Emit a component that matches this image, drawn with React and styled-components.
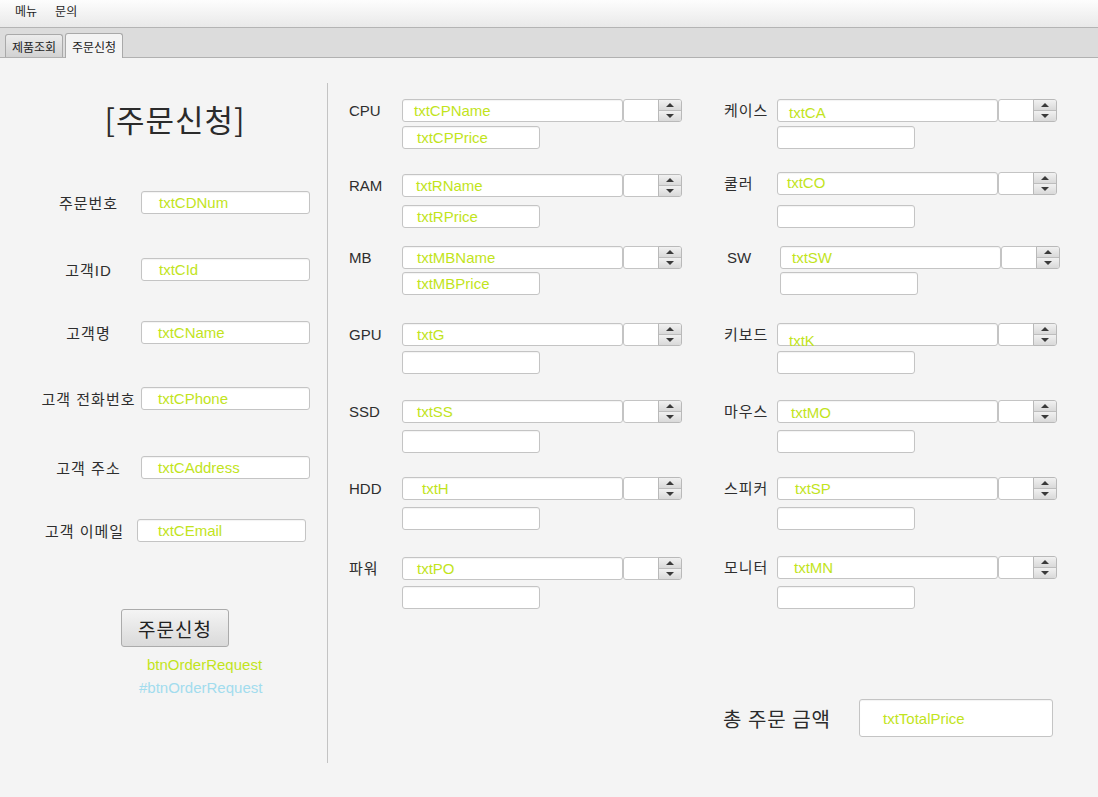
import React from "react";
import styled, { createGlobalStyle } from "styled-components";

const GlobalStyle = createGlobalStyle`
  html, body {
    margin: 0;
    padding: 0;
    background: #f4f4f4;
    font-family: "Liberation Sans", "Noto Sans CJK KR", sans-serif;
    color: #333333;
  }
  * { box-sizing: border-box; }
`;

const Page = styled.div`
  width: 1098px;
  height: 797px;
  background: #f4f4f4;
  overflow: hidden;
`;

/* 메뉴바 */
const MenuBar = styled.div`
  height: 28px;
  display: flex;
  align-items: center;
  padding: 0 0 6px 6px;
  background: linear-gradient(#fdfdfd, #e9e9e9);
  border-bottom: 1px solid #b4b4b4;
`;

const MenuItem = styled.span`
  padding: 0 9px;
  font-family: "Noto Sans CJK KR", sans-serif;
  font-size: 12px;
  color: #1e1e1e;
`;

/* 탭 */
const TabBar = styled.div`
  height: 30px;
  display: flex;
  align-items: flex-end;
  gap: 2px;
  padding-left: 5px;
  background: #dcdcdc;
  border-bottom: 1px solid #b1b1b1;
`;

const Tab = styled.div`
  height: ${(p) => (p.$active ? "25px" : "23px")};
  width: 58px;
  display: flex;
  align-items: center;
  justify-content: center;
  font-family: "Noto Sans CJK KR", sans-serif;
  font-size: 12px;
  color: #222;
  border: 1px solid #a9a9a9;
  border-bottom: none;
  border-radius: 3px 3px 0 0;
  background: ${(p) =>
    p.$active ? "#f4f4f4" : "linear-gradient(#ececec, #d2d2d2)"};
  margin-bottom: ${(p) => (p.$active ? "-1px" : "0")};
`;

const Content = styled.div`
  display: flex;
`;

/* 왼쪽 주문자 정보 */
const LeftPanel = styled.div`
  width: 328px;
  height: 680px;
  margin-top: 25px;
  border-right: 1px solid #c3c3c3;
  display: flex;
  flex-direction: column;
`;

const Title = styled.div`
  margin-top: 17px;
  height: 37px;
  line-height: 37px;
  padding-left: 23px;
  text-align: center;
  font-family: "Noto Sans CJK KR", sans-serif;
  font-size: 31px;
  letter-spacing: 1px;
  color: #2b2b2b;
`;

const FormRow = styled.div`
  display: flex;
  align-items: center;
  margin-top: ${(p) => p.$mt}px;
  padding-left: ${(p) => p.$pl || 36}px;
`;

const RowLabel = styled.span`
  width: 105px;
  flex-shrink: 0;
  text-align: center;
  font-size: 15px;
  letter-spacing: 1px;
  color: #2e2e2e;
`;

const Field = styled.div`
  width: ${(p) => p.$w}px;
  height: ${(p) => p.$h || 23}px;
  flex-shrink: 0;
  margin-top: ${(p) => p.$mt || 0}px;
  display: flex;
  align-items: center;
  padding-left: ${(p) => p.$pl || 0}px;
  background: #ffffff;
  border: 1px solid #c4c4c4;
  border-radius: 3px;
  box-shadow: inset 0 1px 1px rgba(0, 0, 0, 0.05);
  font-family: "Liberation Sans", sans-serif;
  font-size: ${(p) => p.$fs || 15}px;
  color: #c2e41c;
  white-space: nowrap;

  span {
    position: relative;
    top: ${(p) => p.$dy || 0}px;
  }
`;

const OrderButton = styled.button`
  margin: 67px 0 0 121px;
  width: 108px;
  height: 38px;
  padding: 0;
  border: 1px solid #ababab;
  border-radius: 3px;
  background: linear-gradient(#f4f4f4, #dadada);
  font-family: "Noto Sans CJK KR", sans-serif;
  font-size: 19px;
  letter-spacing: 1px;
  color: #222;
`;

const IdText = styled.div`
  margin-top: ${(p) => p.$mt}px;
  margin-left: ${(p) => p.$ml}px;
  height: 18px;
  line-height: 18px;
  font-size: 15px;
  color: ${(p) => (p.$blue ? "#a2dcee" : "#c2e41c")};
`;

/* 오른쪽 부품 */
const PartsArea = styled.div`
  display: flex;
  gap: 42px;
  padding: 41px 0 0 21px;
`;

const PartColumn = styled.div`
  width: 333px;
  flex-shrink: 0;
  display: flex;
  flex-direction: column;
`;

const PartRow = styled.div`
  display: flex;
  margin-top: ${(p) => p.$mt || 0}px;
  padding-left: ${(p) => p.$indent || 0}px;
`;

const PartLabel = styled.div`
  width: 53px;
  flex-shrink: 0;
  height: 23px;
  line-height: 23px;
  font-size: 15px;
  letter-spacing: ${(p) => (p.$latin ? 0 : 1)}px;
  color: #2e2e2e;
`;

const PartFields = styled.div`
  display: flex;
  flex-direction: column;
  flex-shrink: 0;
`;

const NameLine = styled.div`
  display: flex;
`;

const Spinner = styled.div`
  display: flex;
  height: 23px;
`;

const SpinText = styled.div`
  width: 36px;
  background: #fff;
  border: 1px solid #c4c4c4;
  border-radius: 3px 0 0 3px;
`;

const SpinButtons = styled.div`
  width: 24px;
  margin-left: -1px;
  display: flex;
  flex-direction: column;
  border: 1px solid #b9b9b9;
  border-radius: 0 3px 3px 0;
  overflow: hidden;
`;

const SpinButton = styled.div`
  flex: 1;
  display: flex;
  align-items: center;
  justify-content: center;
  background: linear-gradient(#f1f1f1, #d9d9d9);
  & + & {
    border-top: 1px solid #bdbdbd;
  }
`;

const Arrow = styled.i`
  width: 0;
  height: 0;
  border-left: 4px solid transparent;
  border-right: 4px solid transparent;
  ${(p) =>
    p.$down
      ? "border-top: 4px solid #3a3a3a;"
      : "border-bottom: 4px solid #3a3a3a;"}
`;

const TotalRow = styled.div`
  display: flex;
  align-items: center;
  gap: 26px;
  margin: 90px 0 0 -1px;
`;

const TotalLabel = styled.span`
  width: 110px;
  white-space: nowrap;
  font-family: "Noto Sans CJK KR", sans-serif;
  font-size: 20px;
  letter-spacing: 1px;
  color: #2b2b2b;
`;

const customerRows = [
  { label: "주문번호", id: "txtCDNum", mt: 54, pl: 17 },
  { label: "고객ID", id: "txtCId", mt: 44, pl: 17 },
  { label: "고객명", id: "txtCName", mt: 40, pl: 16 },
  { label: "고객 전화번호", id: "txtCPhone", mt: 43, pl: 16 },
  { label: "고객 주소", id: "txtCAddress", mt: 46, pl: 16 },
  { label: "고객 이메일", id: "txtCEmail", mt: 40, pl: 20, rowPl: 32 },
];

const leftParts = [
  { label: "CPU", latin: true, name: "txtCPName", price: "txtCPPrice", mt: 0, gap: 4, pl: 11, ppl: 14 },
  { label: "RAM", latin: true, name: "txtRName", price: "txtRPrice", mt: 25, gap: 8, pl: 13, ppl: 14 },
  { label: "MB", latin: true, name: "txtMBName", price: "txtMBPrice", mt: 18, gap: 3, pl: 14, ppl: 14 },
  { label: "GPU", latin: true, name: "txtG", mt: 28, gap: 5, pl: 14 },
  { label: "SSD", latin: true, name: "txtSS", mt: 26, gap: 7, pl: 14 },
  { label: "HDD", latin: true, name: "txtH", mt: 24, gap: 7, pl: 19 },
  { label: "파워", name: "txtPO", mt: 27, gap: 6, pl: 14 },
];

const rightParts = [
  { label: "케이스", name: "txtCA", mt: 0, gap: 4, pl: 11, dy: 2 },
  { label: "쿨러", name: "txtCO", mt: 23, gap: 10, pl: 9, dy: -1 },
  { label: "SW", latin: true, name: "txtSW", mt: 18, gap: 3, pl: 11, indent: 3 },
  { label: "키보드", name: "txtK", mt: 28, gap: 5, pl: 11, dy: 6 },
  { label: "마우스", name: "txtMO", mt: 26, gap: 7, pl: 13, dy: 1 },
  { label: "스피커", name: "txtSP", mt: 24, gap: 7, pl: 17 },
  { label: "모니터", name: "txtMN", mt: 26, gap: 7, pl: 16 },
];

function Part({ part }) {
  return (
    <PartRow $mt={part.mt} $indent={part.indent}>
      <PartLabel $latin={part.latin}>{part.label}</PartLabel>
      <PartFields>
        <NameLine>
          <Field $w={221} $pl={part.pl} $dy={part.dy}>
            <span>{part.name}</span>
          </Field>
          <Spinner>
            <SpinText />
            <SpinButtons>
              <SpinButton><Arrow /></SpinButton>
              <SpinButton><Arrow $down /></SpinButton>
            </SpinButtons>
          </Spinner>
        </NameLine>
        <Field $w={138} $mt={part.gap} $pl={part.ppl}>
          {part.price && <span>{part.price}</span>}
        </Field>
      </PartFields>
    </PartRow>
  );
}

export default function App() {
  return (
    <Page>
      <GlobalStyle />
      <MenuBar>
        <MenuItem>메뉴</MenuItem>
        <MenuItem>문의</MenuItem>
      </MenuBar>
      <TabBar>
        <Tab>제품조회</Tab>
        <Tab $active>주문신청</Tab>
      </TabBar>

      <Content>
        <LeftPanel>
          <Title>[주문신청]</Title>
          {customerRows.map((row) => (
            <FormRow key={row.id} $mt={row.mt} $pl={row.rowPl}>
              <RowLabel>{row.label}</RowLabel>
              <Field $w={169} $pl={row.pl}>
                <span>{row.id}</span>
              </Field>
            </FormRow>
          ))}
          <OrderButton>주문신청</OrderButton>
          <IdText $mt={9} $ml={147}>btnOrderRequest</IdText>
          <IdText $mt={5} $ml={139} $blue>#btnOrderRequest</IdText>
        </LeftPanel>

        <PartsArea>
          <PartColumn>
            {leftParts.map((p) => (
              <Part key={p.name} part={p} />
            ))}
          </PartColumn>
          <PartColumn>
            {rightParts.map((p) => (
              <Part key={p.name} part={p} />
            ))}
            <TotalRow>
              <TotalLabel>총 주문 금액</TotalLabel>
              <Field $w={194} $h={38} $pl={23}>
                <span>txtTotalPrice</span>
              </Field>
            </TotalRow>
          </PartColumn>
        </PartsArea>
      </Content>
    </Page>
  );
}
